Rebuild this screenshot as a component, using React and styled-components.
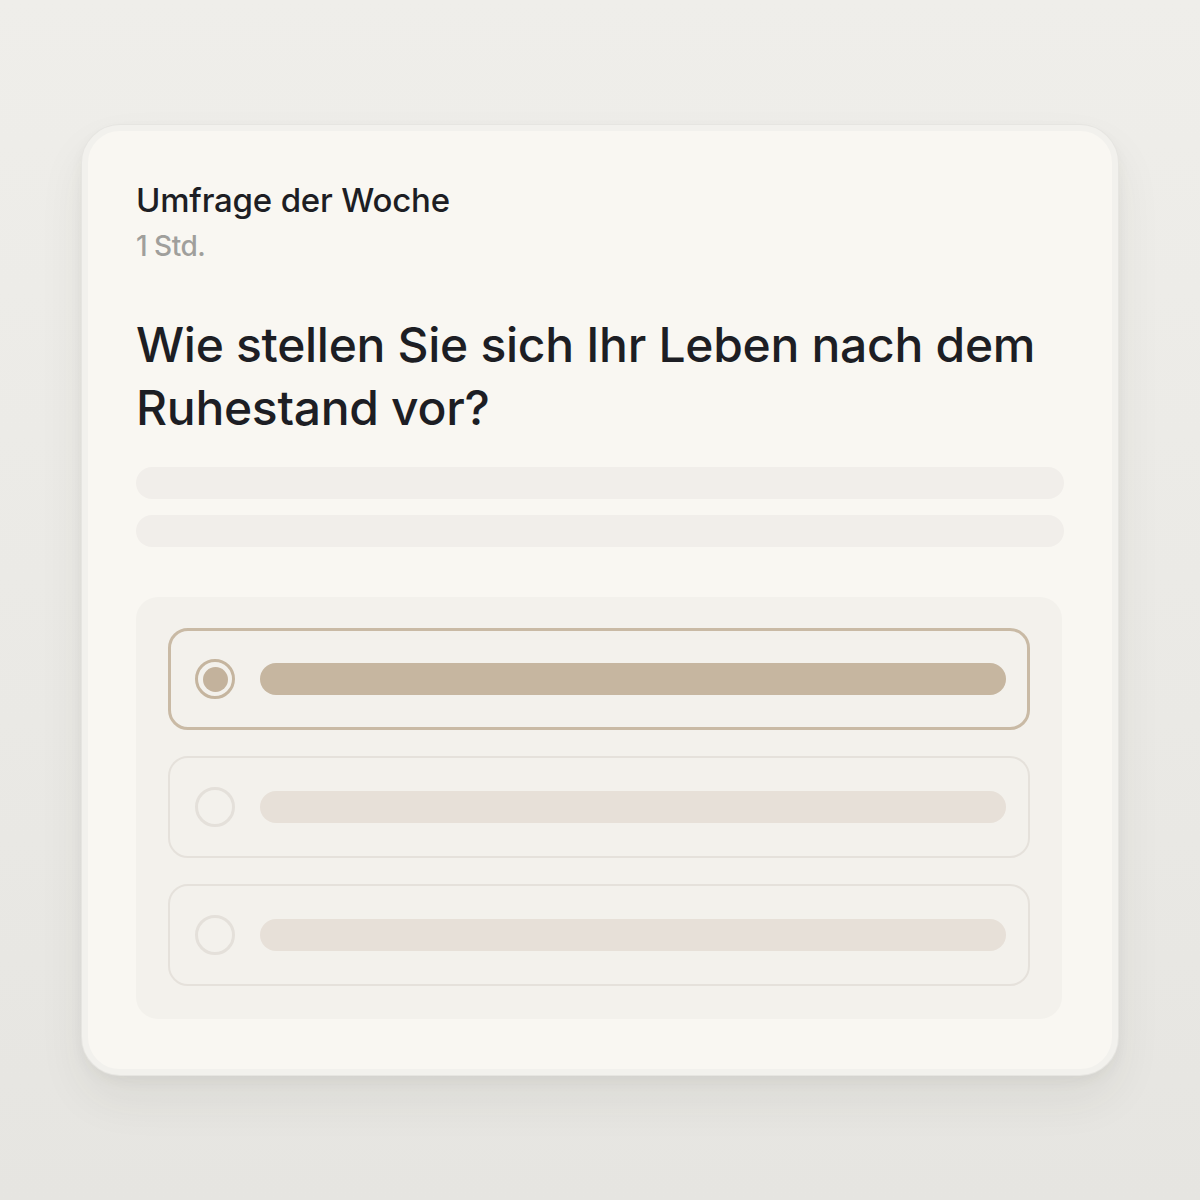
import React from "react";
import styled, { createGlobalStyle } from "styled-components";

const GlobalStyle = createGlobalStyle`
  html, body {
    margin: 0;
    padding: 0;
  }
  body {
    font-family: Inter, "Noto Sans", "Liberation Sans", sans-serif;
    background: #ecebe7;
  }
`;

const Page = styled.div`
  width: 1200px;
  height: 1200px;
  box-sizing: border-box;
  padding-top: 125px;
  display: flex;
  justify-content: center;
  align-items: flex-start;
  background: linear-gradient(180deg, #efeeea 0%, #eae9e5 60%, #e6e5e1 100%);
`;

const Card = styled.div`
  width: 1036px;
  height: 950px;
  box-sizing: border-box;
  border-radius: 38px;
  border: 6px solid #f2f1ed;
  background: #f9f7f2;
  padding: 49px 48px 0 48px;
  box-shadow: 0 0 0 1px #e6e5e1, 0 24px 48px rgba(60, 50, 40, 0.07),
    0 6px 14px rgba(60, 50, 40, 0.05);
  display: flex;
  flex-direction: column;
`;

const Title = styled.div`
  font-size: 33px;
  font-weight: 500;
  color: #1d1e24;
  letter-spacing: -0.2px;
  line-height: 40px;
`;

const Meta = styled.div`
  margin-top: 11px;
  font-size: 28px;
  font-weight: 500;
  color: #a09f9c;
  line-height: 30px;
  letter-spacing: -0.5px;
`;

const Question = styled.h1`
  margin: 52px 0 0 0;
  font-size: 48px;
  font-weight: 500;
  line-height: 63px;
  color: #1d1e24;
  letter-spacing: -0.3px;
`;

const Skeleton = styled.div`
  display: flex;
  flex-direction: column;
  gap: 16px;
  margin-top: 28px;
`;

const SkeletonLine = styled.div`
  height: 32px;
  border-radius: 16px;
  background: #f1eeea;
`;

const OptionsPanel = styled.div`
  margin-top: 50px;
  width: 926px;
  box-sizing: border-box;
  padding: 31px 32px 33px 32px;
  border-radius: 22px;
  background: #f3f1ec;
  display: flex;
  flex-direction: column;
  gap: 26px;
`;

const Option = styled.div`
  height: 102px;
  box-sizing: border-box;
  border-radius: 20px;
  border: ${(p) => (p.$selected ? "3px solid #c9baa5" : "2px solid #e5e1db")};
  display: flex;
  align-items: center;
  padding: 0 ${(p) => (p.$selected ? 21 : 22)}px 0
    ${(p) => (p.$selected ? 24 : 25)}px;
  gap: 25px;
`;

const Radio = styled.div`
  width: 40px;
  height: 40px;
  flex: none;
  box-sizing: border-box;
  border-radius: 50%;
  border: 3px solid ${(p) => (p.$selected ? "#c5b59f" : "#e4e0da")};
  display: flex;
  align-items: center;
  justify-content: center;

  &::after {
    content: "";
    display: ${(p) => (p.$selected ? "block" : "none")};
    width: 25px;
    height: 25px;
    border-radius: 50%;
    background: #c3b29c;
  }
`;

const Bar = styled.div`
  flex: 1;
  height: 32px;
  border-radius: 16px;
  background: ${(p) => (p.$selected ? "#c6b6a0" : "#e7e0d8")};
`;

const options = [true, false, false];

export default function App() {
  return (
    <>
      <GlobalStyle />
      <Page>
        <Card>
          <Title>Umfrage der Woche</Title>
          <Meta>1 Std.</Meta>
          <Question>
            Wie stellen Sie sich Ihr Leben nach dem
            <br />
            Ruhestand vor?
          </Question>
          <Skeleton>
            <SkeletonLine />
            <SkeletonLine />
          </Skeleton>
          <OptionsPanel>
            {options.map((sel, i) => (
              <Option key={i} $selected={sel}>
                <Radio $selected={sel} />
                <Bar $selected={sel} />
              </Option>
            ))}
          </OptionsPanel>
        </Card>
      </Page>
    </>
  );
}
